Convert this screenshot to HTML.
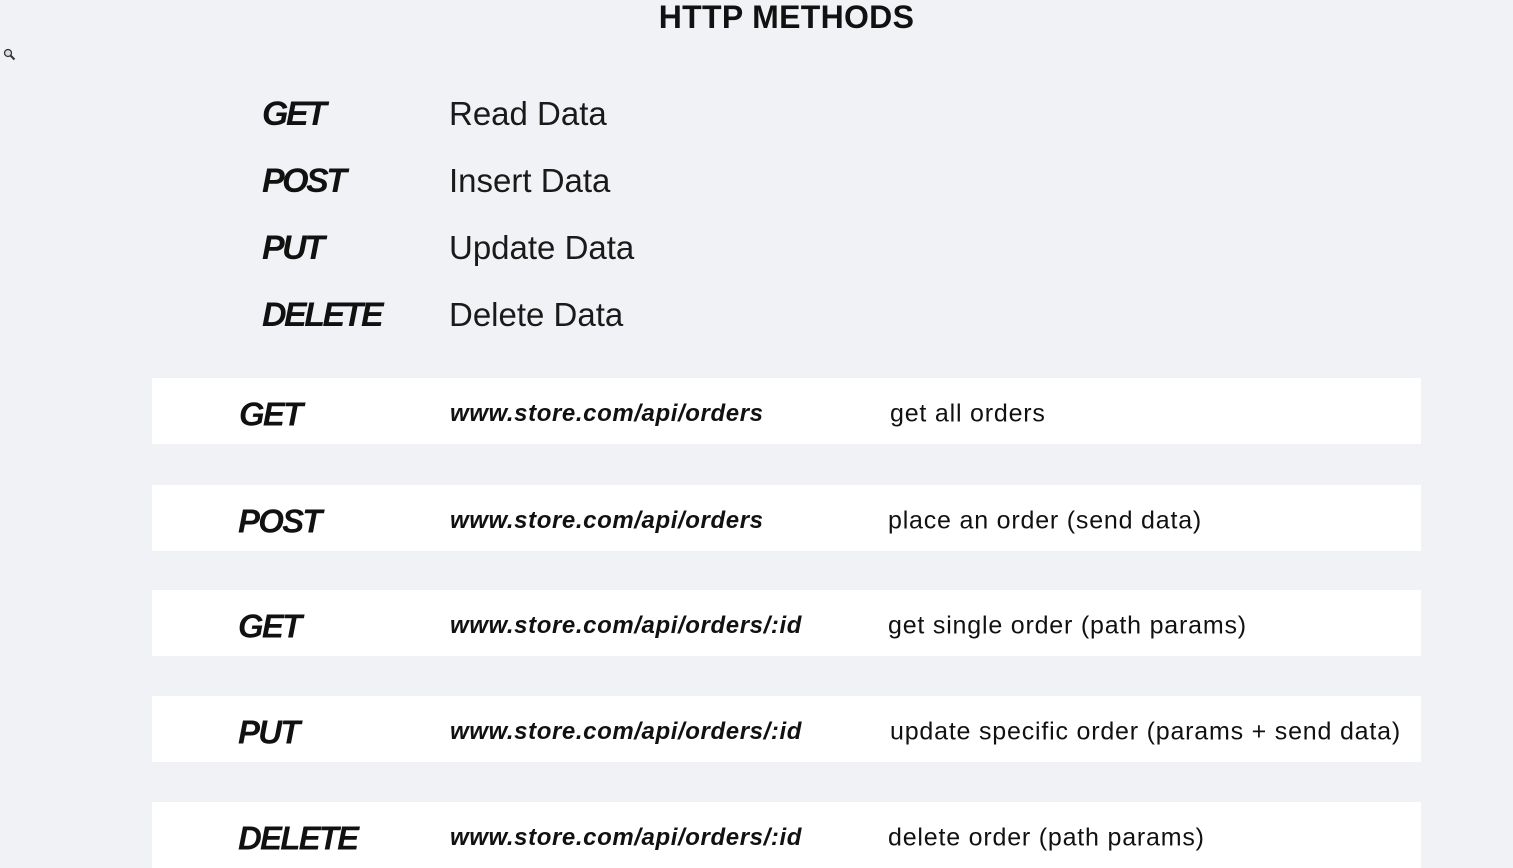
<!DOCTYPE html>
<html><head><meta charset="utf-8"><style>
html,body{margin:0;padding:0;width:1513px;height:864px;overflow:hidden;background:#f1f2f5;font-family:"Liberation Sans",sans-serif;color:#111;}
.t{position:absolute;white-space:nowrap;line-height:1;}
.title{left:0;width:1573px;text-align:center;top:1px;font-weight:bold;font-size:32px;letter-spacing:0.3px;}
.m{font-weight:bold;font-style:italic;font-size:34px;left:262px;letter-spacing:-2.5px;}
.d{font-size:33px;left:449px;color:#1a1a1a;}
.row{position:absolute;left:152px;width:1269px;height:66px;background:#fff;}
.row span{position:absolute;top:50%;transform:translateY(-50%);margin-top:3px;white-space:nowrap;line-height:1;}
.rm{font-weight:bold;font-style:italic;font-size:33px;left:86px;letter-spacing:-1.8px;}
.ru{font-weight:bold;font-style:italic;font-size:24px;left:298px;letter-spacing:0.6px;}
.rd{font-size:25px;left:736px;letter-spacing:0.8px;}
</style></head><body>
<div class="t title">HTTP METHODS</div>
<svg style="position:absolute;left:3px;top:48px" width="13" height="13" viewBox="0 0 13 13"><circle cx="5" cy="5" r="3.5" fill="#ddd" stroke="#333" stroke-width="1.3"/><path d="M7.5 7.5L11.5 11.5" stroke="#333" stroke-width="2"/></svg>
<div class="t m" style="top:97px">GET</div><div class="t d" style="top:97px">Read Data</div>
<div class="t m" style="top:164px">POST</div><div class="t d" style="top:164px">Insert Data</div>
<div class="t m" style="top:231px">PUT</div><div class="t d" style="top:231px">Update Data</div>
<div class="t m" style="top:298px">DELETE</div><div class="t d" style="top:298px">Delete Data</div>

<div class="row" style="top:378px"><span class="rm" style="left:87px">GET</span><span class="ru">www.store.com/api/orders</span><span class="rd" style="left:738px">get all orders</span></div>
<div class="row" style="top:485px"><span class="rm">POST</span><span class="ru">www.store.com/api/orders</span><span class="rd">place an order (send data)</span></div>
<div class="row" style="top:590px"><span class="rm">GET</span><span class="ru">www.store.com/api/orders/:id</span><span class="rd">get single order (path params)</span></div>
<div class="row" style="top:696px"><span class="rm">PUT</span><span class="ru">www.store.com/api/orders/:id</span><span class="rd" style="left:738px">update specific order (params + send data)</span></div>
<div class="row" style="top:802px"><span class="rm">DELETE</span><span class="ru">www.store.com/api/orders/:id</span><span class="rd">delete order (path params)</span></div>
</body></html>
